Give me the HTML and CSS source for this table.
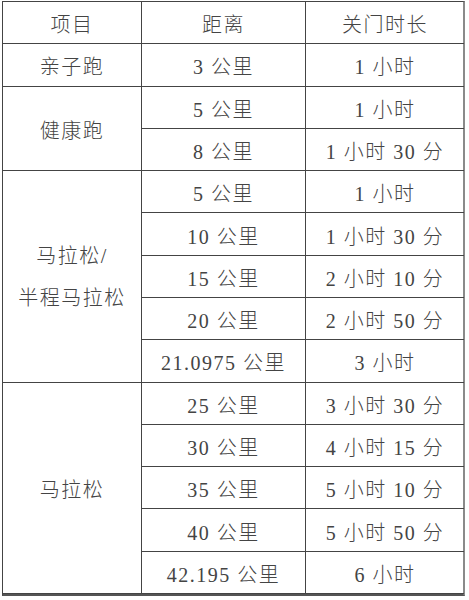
FILE: index.html
```html
<!DOCTYPE html>
<html lang="zh">
<head>
<meta charset="utf-8">
<link rel="stylesheet" href="styles.css">
</head>
<body>
<div class="grid">
  <div class="cell">项目</div>
  <div class="cell">距离</div>
  <div class="cell last">关门时长</div>

  <div class="cell">亲子跑</div>
  <div class="cell">3 公里</div>
  <div class="cell last">1 小时</div>

  <div class="cell span2">健康跑</div>
  <div class="cell">5 公里</div>
  <div class="cell last">1 小时</div>
  <div class="cell">8 公里</div>
  <div class="cell last">1 小时 30 分</div>

  <div class="cell span5 two-line">马拉松/<br>半程马拉松</div>
  <div class="cell">5 公里</div>
  <div class="cell last">1 小时</div>
  <div class="cell">10 公里</div>
  <div class="cell last">1 小时 30 分</div>
  <div class="cell">15 公里</div>
  <div class="cell last">2 小时 10 分</div>
  <div class="cell">20 公里</div>
  <div class="cell last">2 小时 50 分</div>
  <div class="cell">21.0975 公里</div>
  <div class="cell last">3 小时</div>

  <div class="cell span5">马拉松</div>
  <div class="cell">25 公里</div>
  <div class="cell last">3 小时 30 分</div>
  <div class="cell">30 公里</div>
  <div class="cell last">4 小时 15 分</div>
  <div class="cell">35 公里</div>
  <div class="cell last">5 小时 10 分</div>
  <div class="cell">40 公里</div>
  <div class="cell last">5 小时 50 分</div>
  <div class="cell">42.195 公里</div>
  <div class="cell last">6 小时</div>
</div>
</body>
</html>
```

FILE: styles.css
```css
html, body {
  margin: 0;
  padding: 0;
  background: #ffffff;
}

body {
  padding: 1px 0 0 2px;
  font-family: "Liberation Serif", "Noto Sans CJK SC", serif;
  font-size: 20px;
  font-weight: 300;
  letter-spacing: 1.5px;
  color: #444444;
}

.grid {
  display: grid;
  grid-template-columns: 139px 164px 158px;
  grid-template-rows: repeat(14, 1fr);
  width: 463px;
  height: 595px;
  box-sizing: border-box;
  border-top: 1px solid #444;
  border-left: 1px solid #444;
  border-right: 2px solid #8a8a8a;
  border-bottom: 2px solid #555;
}

.cell {
  display: flex;
  align-items: center;
  justify-content: center;
  text-align: center;
  border-right: 1px solid #444;
  border-bottom: 1px solid #444;
  padding-top: 2px;
  box-sizing: border-box;
  white-space: nowrap;
}

.cell.last {
  border-right: none;
}

.span2 {
  grid-row: span 2;
}

.span5 {
  grid-row: span 5;
}

.two-line {
  line-height: 42px;
}
```
